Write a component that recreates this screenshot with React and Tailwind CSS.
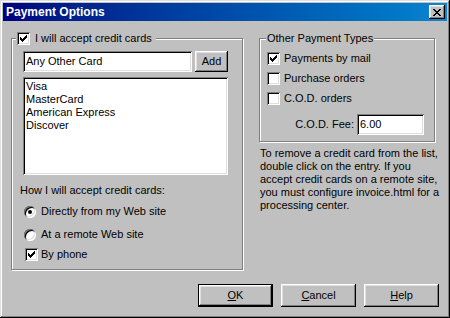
import React from "react";

const raised =
  "shadow-[inset_-1px_-1px_0_#000,inset_1px_1px_0_#fff,inset_-2px_-2px_0_#808080,inset_2px_2px_0_#dfdfdf]";
const sunken =
  "shadow-[inset_1px_1px_0_#808080,inset_-1px_-1px_0_#fff,inset_2px_2px_0_#000,inset_-2px_-2px_0_#dfdfdf]";
const etched = "border border-[#808080] shadow-[inset_1px_1px_0_#fff,1px_1px_0_#fff]";

const checkPixels = [
  [6, 0], [5, 1], [6, 1], [0, 2], [4, 2], [5, 2], [6, 2],
  [0, 3], [1, 3], [3, 3], [4, 3], [5, 3],
  [0, 4], [1, 4], [2, 4], [3, 4], [4, 4],
  [1, 5], [2, 5], [3, 5], [2, 6],
];

const closePixels = [
  [0, 0], [1, 0], [6, 0], [7, 0],
  [1, 1], [2, 1], [5, 1], [6, 1],
  [2, 2], [3, 2], [4, 2], [5, 2],
  [3, 3], [4, 3],
  [2, 4], [3, 4], [4, 4], [5, 4],
  [1, 5], [2, 5], [5, 5], [6, 5],
  [0, 6], [1, 6], [6, 6], [7, 6],
];

const Check = ({ checked }) => (
  <span className={`w-[13px] h-[13px] bg-white shrink-0 flex items-center justify-center ${sunken}`}>
    {checked && (
      <svg width="7" height="7" viewBox="0 0 7 7" shapeRendering="crispEdges">
        {checkPixels.map(([x, y]) => (
          <rect key={`${x}-${y}`} x={x} y={y} width="1" height="1" fill="#000" />
        ))}
      </svg>
    )}
  </span>
);

const Radio = ({ checked }) => (
  <span className="w-[12px] h-[12px] rounded-full bg-white shrink-0 flex items-center justify-center shadow-[inset_1px_1px_0_#808080,inset_-1px_-1px_0_#fff,inset_2px_2px_0_#000,inset_-2px_-2px_0_#dfdfdf]">
    {checked && <span className="w-[4px] h-[4px] rounded-full bg-black" />}
  </span>
);

const Button = ({ children, isDefault, size = "w-[75px] h-[23px]" }) => (
  <button
    className={`${size} shrink-0 bg-[#c0c0c0] text-black text-[11px] flex items-center justify-center ${
      isDefault ? "border border-black" : ""
    } ${raised}`}
  >
    {children}
  </button>
);

export default function App() {
  return (
    <div className="w-[450px] h-[318px] bg-[#c0c0c0] p-[3px] flex flex-col font-['Liberation_Sans',Arial,sans-serif] text-[11px] text-black shadow-[inset_-1px_-1px_0_#000,inset_1px_1px_0_#dfdfdf,inset_-2px_-2px_0_#808080,inset_2px_2px_0_#fff]">
      {/* title bar */}
      <div className="h-[18px] flex items-center justify-between pl-[3px] pr-[2px] bg-gradient-to-r from-[#000080] to-[#1084d0]">
        <span className="text-white font-bold text-[12px] leading-none">Payment Options</span>
        <button className={`w-[16px] h-[14px] bg-[#c0c0c0] flex items-center justify-center ${raised}`}>
          <svg width="8" height="7" viewBox="0 0 8 7" shapeRendering="crispEdges">
            {closePixels.map(([x, y]) => (
              <rect key={`${x}-${y}`} x={x} y={y} width="1" height="1" fill="#000" />
            ))}
          </svg>
        </button>
      </div>

      <div className="flex-1 flex flex-col px-[8px]">
        <div className="flex gap-[16px] mt-[17px]">
          {/* credit cards group */}
          <div className={`relative w-[232px] h-[232px] flex flex-col ${etched}`}>
            <div className="absolute left-[4px] top-[-7px] flex items-center gap-[5px] bg-[#c0c0c0] pl-[1px] pr-[4px] h-[13px]">
              <Check checked />
              <span className="leading-[13px]">I will accept credit cards</span>
            </div>
            <div className="flex items-start gap-[3px] mt-[12px] ml-[11px]">
              <div className={`w-[169px] h-[21px] bg-white pl-[3px] flex items-center ${sunken}`}>
                Any Other Card
              </div>
              <Button size="w-[33px] h-[21px]">Add</Button>
            </div>
            <div className={`w-[205px] h-[98px] mt-[5px] ml-[11px] bg-white pl-[3px] pt-[3px] leading-[13px] ${sunken}`}>
              <div>Visa</div>
              <div>MasterCard</div>
              <div>American Express</div>
              <div>Discover</div>
            </div>
            <div className="mt-[9px] ml-[8px] leading-[13px]">How I will accept credit cards:</div>
            <div className="flex items-center gap-[5px] mt-[8px] ml-[12px] h-[13px]">
              <Radio checked />
              <span>Directly from my Web site</span>
            </div>
            <div className="flex items-center gap-[5px] mt-[10px] ml-[12px] h-[13px]">
              <Radio />
              <span>At a remote Web site</span>
            </div>
            <div className="flex items-center gap-[3px] mt-[7px] ml-[13px] h-[13px]">
              <Check checked />
              <span>By phone</span>
            </div>
          </div>

          {/* right column */}
          <div className="w-[176px] flex flex-col">
            <div className={`relative h-[104px] flex flex-col ${etched}`}>
              <span className="absolute left-[6px] top-[-7px] bg-[#c0c0c0] px-[1px] leading-[13px]">
                Other Payment Types
              </span>
              <div className="flex items-center gap-[4px] mt-[13px] ml-[7px] h-[13px]">
                <Check checked />
                <span>Payments by mail</span>
              </div>
              <div className="flex items-center gap-[4px] mt-[7px] ml-[7px] h-[13px]">
                <Check />
                <span>Purchase orders</span>
              </div>
              <div className="flex items-center gap-[4px] mt-[7px] ml-[7px] h-[13px]">
                <Check />
                <span>C.O.D. orders</span>
              </div>
              <div className="flex items-center justify-end gap-[3px] mt-[9px] pr-[10px]">
                <span>C.O.D. Fee:</span>
                <div className={`w-[67px] h-[21px] bg-white pl-[3px] flex items-center ${sunken}`}>6.00</div>
              </div>
            </div>
            <p className="mt-[5px] ml-[1px] leading-[13px] whitespace-nowrap">
              To remove a credit card from the list,
              <br />
              double click on the entry. If you
              <br />
              accept credit cards on a remote site,
              <br />
              you must configure invoice.html for a
              <br />
              processing center.
            </p>
          </div>
        </div>

        <div className="flex justify-end gap-[8px] mt-[14px]">
          <Button isDefault>
            <span className="underline">O</span>K
          </Button>
          <Button>
            <span className="underline">C</span>ancel
          </Button>
          <Button>
            <span className="underline">H</span>elp
          </Button>
        </div>
      </div>
    </div>
  );
}
